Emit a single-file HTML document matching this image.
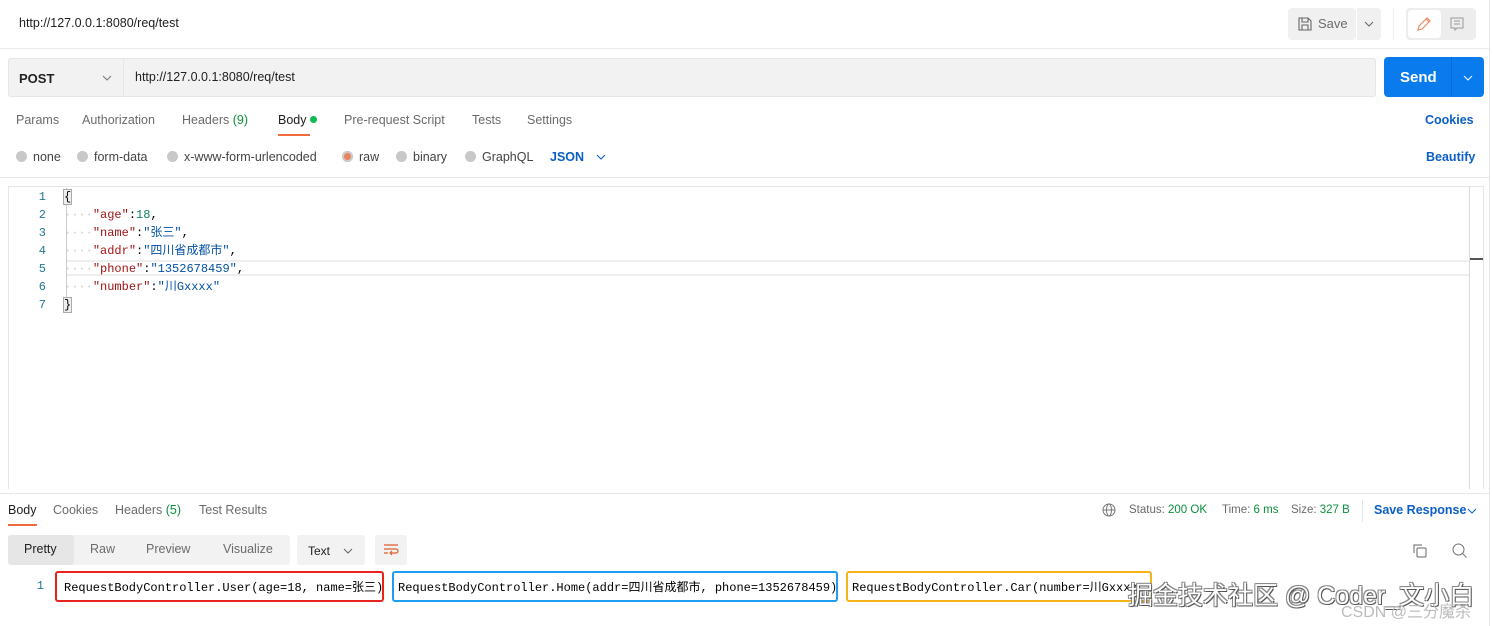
<!DOCTYPE html>
<html><head><meta charset="utf-8"><style>
*{margin:0;padding:0;box-sizing:border-box}
body{width:1493px;height:626px;overflow:hidden;background:#fff;font-family:"Liberation Sans","Noto Sans CJK SC",sans-serif;font-size:12px;color:#212121;position:relative}
.a{position:absolute;white-space:nowrap}
.g{color:#6b6b6b}
.mono{font-family:"Liberation Mono","Noto Sans CJK SC",monospace;font-size:12px}
.k{color:#a31515}.s{color:#0451a5}.n{color:#098658}
.dot{display:inline-block;width:11px;height:11px;border-radius:50%;background:#c8c8c8;vertical-align:-1px;margin-right:6px}
</style></head><body>
<div class="a" style="left:1489px;top:0;width:1px;height:626px;background:#e6e6e6"></div>
<div class="a" style="left:19px;top:16px;font-size:12.5px;color:#212121">http://127.0.0.1:8080/req/test</div>
<div class="a" style="left:1288px;top:8px;width:68px;height:32px;background:#f0f0f0;border-radius:4px"></div>
<svg class="a" style="left:1297px;top:16px" width="16" height="16" viewBox="0 0 16 16"><path d="M2 2h9l3 3v9H2z M5 2v4h6V2 M5 14v-5h6v5" fill="none" stroke="#666" stroke-width="1.1"/></svg>
<div class="a" style="left:1318px;top:16px;font-size:13px;color:#6b6b6b">Save</div>
<div class="a" style="left:1357px;top:8px;width:24px;height:32px;background:#f0f0f0;border-radius:0 4px 4px 0"></div>
<svg class="a" style="left:1364px;top:20px" width="10" height="8"><path d="M1 2l4 4 4-4" fill="none" stroke="#666"/></svg>
<div class="a" style="left:1393px;top:8px;width:1px;height:32px;background:#eee"></div>
<div class="a" style="left:1406px;top:8px;width:70px;height:32px;background:#ededed;border-radius:4px"></div>
<div class="a" style="left:1408px;top:10px;width:33px;height:28px;background:#fff;border-radius:4px"></div>
<svg class="a" style="left:1416px;top:16px" width="16" height="16"><path d="M2 14l1-4 8-8 3 3-8 8z M10 3l3 3" fill="none" stroke="#e8845c" stroke-width="1.1"/></svg>
<svg class="a" style="left:1449px;top:16px" width="16" height="16"><path d="M2 2h12v10H8l-2 2v-2H2z M5 5h6 M5 8h6" fill="none" stroke="#999" stroke-width="1"/></svg>
<div class="a" style="left:0;top:48px;width:1489px;height:1px;background:#ebebeb"></div>

<div class="a" style="left:8px;top:58px;width:1368px;height:39px;background:#f2f2f2;border:1px solid #e6e6e6;border-radius:3px"></div>
<div class="a" style="left:123px;top:58px;width:1px;height:39px;background:#e6e6e6"></div>
<div class="a" style="left:19px;top:71px;font-size:13px;font-weight:bold">POST</div>
<svg class="a" style="left:102px;top:74px" width="10" height="8"><path d="M1 2l4 4 4-4" fill="none" stroke="#777"/></svg>
<div class="a" style="left:135px;top:70px;font-size:12.5px">http://127.0.0.1:8080/req/test</div>
<div class="a" style="left:1384px;top:57px;width:100px;height:40px;background:#097bed;border-radius:4px"></div>
<div class="a" style="left:1451px;top:57px;width:1px;height:40px;background:#0a6ad0"></div>
<div class="a" style="left:1400px;top:69px;font-size:15px;font-weight:bold;color:#fff">Send</div>
<svg class="a" style="left:1463px;top:74px" width="10" height="8"><path d="M1 2l4 4 4-4" fill="none" stroke="#fff"/></svg>

<div class="a g" style="left:16px;top:113px;font-size:12.5px">Params</div>
<div class="a g" style="left:82px;top:113px;font-size:12.5px">Authorization</div>
<div class="a g" style="left:182px;top:113px;font-size:12.5px">Headers <span style="color:#0a8f3c">(9)</span></div>
<div class="a" style="left:278px;top:113px;font-size:12.5px">Body <span style="display:inline-block;width:7px;height:7px;border-radius:50%;background:#0cbb52;vertical-align:1px"></span></div>
<div class="a" style="left:278px;top:134px;width:32px;height:2px;background:#f26b3a"></div>
<div class="a g" style="left:344px;top:113px;font-size:12.5px">Pre-request Script</div>
<div class="a g" style="left:472px;top:113px;font-size:12.5px">Tests</div>
<div class="a g" style="left:527px;top:113px;font-size:12.5px">Settings</div>
<div class="a" style="left:1425px;top:113px;font-size:12.5px;color:#0b5fc6;font-weight:bold">Cookies</div>

<div class="a" style="left:16px;top:150px;font-size:12.5px;color:#444"><span class="dot"></span>none</div>
<div class="a" style="left:77px;top:150px;font-size:12.5px;color:#444"><span class="dot"></span>form-data</div>
<div class="a" style="left:167px;top:150px;font-size:12.5px;color:#444"><span class="dot"></span>x-www-form-urlencoded</div>
<div class="a" style="left:342px;top:150px;font-size:12.5px;color:#444"><span class="dot" style="background:#e8845c;box-shadow:inset 0 0 0 2px #ccc"></span>raw</div>
<div class="a" style="left:396px;top:150px;font-size:12.5px;color:#444"><span class="dot"></span>binary</div>
<div class="a" style="left:465px;top:150px;font-size:12.5px;color:#444"><span class="dot"></span>GraphQL</div>
<div class="a" style="left:550px;top:150px;font-size:12.5px;color:#0b5fc6;font-weight:bold">JSON</div>
<svg class="a" style="left:596px;top:153px" width="10" height="8"><path d="M1 2l4 4 4-4" fill="none" stroke="#0b5fc6"/></svg>
<div class="a" style="left:1426px;top:150px;font-size:12.5px;color:#0b5fc6;font-weight:bold">Beautify</div>
<div class="a" style="left:0;top:177px;width:1489px;height:1px;background:#e6e6e6"></div>

<div class="a" style="left:8px;top:186px;width:1476px;height:303px;border:1px solid #e6e6e6;border-bottom:none"></div>
<div class="a" style="left:1469px;top:186px;width:1px;height:303px;background:#dcdcdc"></div>
<div class="a" style="left:1470px;top:258px;width:13px;height:2px;background:#555"></div>
<div class="a" style="left:66px;top:260px;width:1403px;height:16px;border-top:2px solid #eee;border-bottom:2px solid #eee"></div>
<div class="a" style="left:66px;top:188px;width:1px;height:125px;background:#ccc"></div>
<div class="a mono" style="left:0;top:188px;width:46px;text-align:right;line-height:18px;color:#237893">1<br>2<br>3<br>4<br>5<br>6<br>7</div>
<div class="a mono" style="left:64px;top:188px;line-height:18px;color:#000">
<span style="background:#eee;outline:1px solid #aaa">{</span><br>
<span style="color:#ccc">····</span><span class="k">"age"</span>:<span class="n">18</span>,<br>
<span style="color:#ccc">····</span><span class="k">"name"</span>:<span class="s">"张三"</span>,<br>
<span style="color:#ccc">····</span><span class="k">"addr"</span>:<span class="s">"四川省成都市"</span>,<br>
<span style="color:#ccc">····</span><span class="k">"phone"</span>:<span class="s">"1352678459"</span>,<br>
<span style="color:#ccc">····</span><span class="k">"number"</span>:<span class="s">"川Gxxxx"</span><br>
<span style="background:#eee;outline:1px solid #aaa">}</span></div>
<div class="a" style="left:0;top:493px;width:1489px;height:1px;background:#e6e6e6"></div>

<div class="a" style="left:8px;top:503px;font-size:12.5px">Body</div>
<div class="a" style="left:8px;top:524px;width:29px;height:2px;background:#f26b3a"></div>
<div class="a g" style="left:53px;top:503px;font-size:12.5px">Cookies</div>
<div class="a g" style="left:115px;top:503px;font-size:12.5px">Headers <span style="color:#0a8f3c">(5)</span></div>
<div class="a g" style="left:199px;top:503px;font-size:12.5px">Test Results</div>
<svg class="a" style="left:1102px;top:503px" width="14" height="14"><circle cx="7" cy="7" r="6" fill="none" stroke="#777"/><ellipse cx="7" cy="7" rx="2.5" ry="6" fill="none" stroke="#777"/><path d="M1 7h12" stroke="#777"/></svg>
<div class="a g" style="left:1129px;top:504px;font-size:11.5px">Status: <span style="color:#0a8f3c">200 OK</span></div>
<div class="a g" style="left:1222px;top:504px;font-size:11.5px">Time: <span style="color:#0a8f3c">6 ms</span></div>
<div class="a g" style="left:1291px;top:504px;font-size:11.5px">Size: <span style="color:#0a8f3c">327 B</span></div>
<div class="a" style="left:1362px;top:500px;width:1px;height:22px;background:#e6e6e6"></div>
<div class="a" style="left:1374px;top:503px;font-size:12.5px;color:#0b5fc6;font-weight:bold">Save Response</div>
<svg class="a" style="left:1467px;top:507px" width="10" height="8"><path d="M1 2l4 4 4-4" fill="none" stroke="#0b5fc6"/></svg>

<div class="a" style="left:8px;top:535px;width:282px;height:30px;background:#f2f2f2;border-radius:3px"></div>
<div class="a" style="left:8px;top:535px;width:66px;height:30px;background:#e6e6e6;border-radius:3px"></div>
<div class="a" style="left:24px;top:542px;font-size:12.5px">Pretty</div>
<div class="a g" style="left:90px;top:542px;font-size:12.5px">Raw</div>
<div class="a g" style="left:146px;top:542px;font-size:12.5px">Preview</div>
<div class="a g" style="left:223px;top:542px;font-size:12.5px">Visualize</div>
<div class="a" style="left:297px;top:535px;width:68px;height:30px;background:#f2f2f2;border-radius:3px"></div>
<div class="a" style="left:308px;top:544px;font-size:12px">Text</div>
<svg class="a" style="left:343px;top:547px" width="10" height="8"><path d="M1 2l4 4 4-4" fill="none" stroke="#666"/></svg>
<div class="a" style="left:375px;top:535px;width:32px;height:30px;background:#f2f2f2;border-radius:3px"></div>
<svg class="a" style="left:383px;top:543px" width="16" height="14"><path d="M1 2h14 M1 6h12a2 2 0 0 1 0 4h-5 M9 8l-2 2 2 2 M1 10h4" fill="none" stroke="#e0602e" stroke-width="1.2"/></svg>
<svg class="a" style="left:1412px;top:543px" width="16" height="16"><path d="M2 10V2h8" fill="none" stroke="#666"/><rect x="5" y="5" width="9" height="9" rx="1" fill="none" stroke="#666"/></svg>
<svg class="a" style="left:1451px;top:542px" width="18" height="18"><circle cx="7.5" cy="7.5" r="5.5" fill="none" stroke="#777"/><path d="M11.5 11.5l4 4" stroke="#777"/></svg>

<div class="a mono" style="left:0;top:579px;width:44px;text-align:right;color:#237893">1</div>
<div class="a" style="left:55px;top:571px;width:329px;height:31px;border:2px solid #e8231e;border-radius:3px"></div>
<div class="a" style="left:392px;top:571px;width:446px;height:31px;border:2px solid #1f9df0;border-radius:3px"></div>
<div class="a" style="left:846px;top:571px;width:306px;height:31px;border:2px solid #f5b318;border-radius:3px"></div>
<div class="a mono" style="left:64px;top:578px;color:#000">RequestBodyController.User(age=18, name=张三)</div>
<div class="a mono" style="left:398px;top:578px;color:#000">RequestBodyController.Home(addr=四川省成都市, phone=1352678459)</div>
<div class="a mono" style="left:852px;top:578px;color:#000">RequestBodyController.Car(number=川Gxxxx</div>
<div class="a" style="left:1128px;top:576px;font-size:25px;color:#fff;text-shadow:1px 1px 0 #555,-1px -1px 0 #888,1px -1px 0 #888,-1px 1px 0 #888">掘金技术社区 @ Coder_文小白</div>
<div class="a" style="left:1341px;top:598px;font-size:16px;color:#bbb">CSDN @三分魔杀</div>
</body></html>
